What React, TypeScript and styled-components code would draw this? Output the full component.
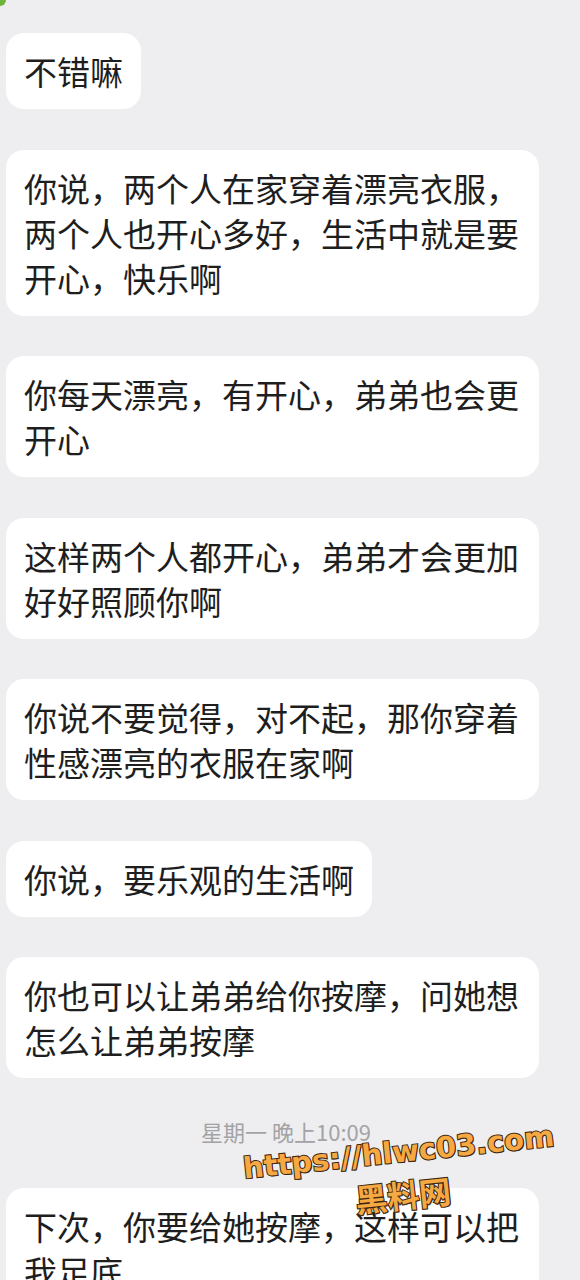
import styled, { createGlobalStyle } from 'styled-components';

const GlobalStyle = createGlobalStyle`
    html, body {
        margin: 0;
        padding: 0;
        background: #eeeef0;
    }
    body {
        font-family: "Noto Sans CJK SC", "Noto Sans", sans-serif;
        color: #1e1e1e;
    }
`;

type Message =
    | { kind: 'text'; lines: string }
    | { kind: 'time'; label: string };

const messages: Message[] = [
    { kind: 'text', lines: '不错嘛' },
    { kind: 'text', lines: '你说，两个人在家穿着漂亮衣服，两个人也开心多好，生活中就是要开心，快乐啊' },
    { kind: 'text', lines: '你每天漂亮，有开心，弟弟也会更开心' },
    { kind: 'text', lines: '这样两个人都开心，弟弟才会更加好好照顾你啊' },
    { kind: 'text', lines: '你说不要觉得，对不起，那你穿着性感漂亮的衣服在家啊' },
    { kind: 'text', lines: '你说，要乐观的生活啊' },
    { kind: 'text', lines: '你也可以让弟弟给你按摩，问她想怎么让弟弟按摩' },
    { kind: 'time', label: '星期一 晚上10:09' },
    { kind: 'text', lines: '下次，你要给她按摩，这样可以把我足底' },
];

const Screen = styled.div`
    position: relative;
    width: 580px;
    height: 1280px;
    overflow: hidden;
    background: #eeeef0;
`;

const Corner = styled.div`
    position: absolute;
    left: 0;
    top: 0;
    width: 6px;
    height: 6px;
    border-bottom-right-radius: 6px;
    background: #6cb43a;
`;

const Thread = styled.div`
    display: flex;
    flex-direction: column;
    align-items: flex-start;
    gap: 40.5px;
    padding: 33px 0 0 6px;
`;

const Bubble = styled.div`
    box-sizing: border-box;
    max-width: 533px;
    padding: 16px 18px 15px;
    background: #ffffff;
    border-radius: 18px;
    font-size: 33px;
    line-height: 45px;
    word-break: break-all;
`;

const TimeRow = styled.div`
    align-self: stretch;
    width: 552px;
    margin: -2.5px 0 1.5px;
    padding-left: 4px;
    text-align: center;
    font-size: 22px;
    line-height: 30px;
    color: #a3a3a6;
`;

const Watermark = styled.div`
    position: absolute;
    left: 236px;
    top: 1138px;
    width: 330px;
    display: flex;
    flex-direction: column;
    align-items: center;
    transform: rotate(-6deg);
    transform-origin: center;
    pointer-events: none;
`;

const MarkText = styled.span<{ $size: number; $gap?: number }>`
    margin-top: ${(p) => p.$gap ?? 0}px;
    font-family: "DejaVu Sans", "Noto Sans CJK SC", sans-serif;
    font-weight: 700;
    font-size: ${(p) => p.$size}px;
    line-height: 1;
    color: #f6a843;
    -webkit-text-stroke: 2px #3b2812;
    paint-order: stroke fill;
    text-shadow: 1px 1px 0 #3b2812;
    white-space: nowrap;
`;

export default function App() {
    return (
        <Screen>
            <GlobalStyle />
            <Corner />
            <Thread>
                {messages.map((m, i) =>
                    m.kind === 'time' ? (
                        <TimeRow key={i}>{m.label}</TimeRow>
                    ) : (
                        <Bubble key={i}>{m.lines}</Bubble>
                    ),
                )}
            </Thread>
            <Watermark>
                <MarkText $size={29}>https://hlwc03.com</MarkText>
                <MarkText $size={32} $gap={14}>
                    黑料网
                </MarkText>
            </Watermark>
        </Screen>
    );
}
